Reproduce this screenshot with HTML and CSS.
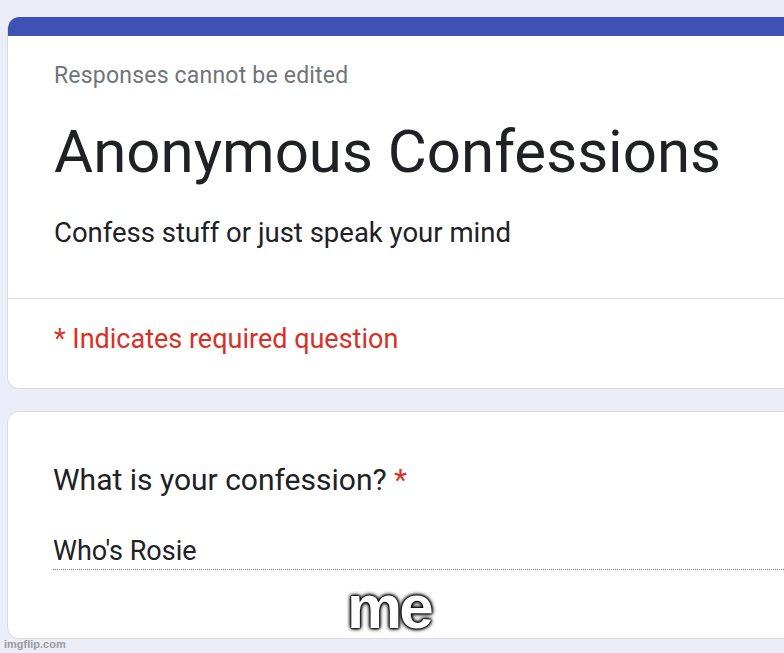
FILE: index.html
```html
<!DOCTYPE html>
<html lang="en">
<head>
  <meta charset="UTF-8" />
  <meta name="viewport" content="width=device-width, initial-scale=1.0"/>
  <title>Anonymous Confessions</title>
  <link rel="stylesheet" href="styles.css">
</head>
<body>
  <div class="page">
    <div class="card header-card">
      <div class="accent"></div>
      <div class="header-body">
        <div class="note">Responses cannot be edited</div>
        <h1 class="title">Anonymous Confessions</h1>
        <div class="desc">Confess stuff or just speak your mind</div>
      </div>
      <div class="required">* Indicates required question</div>
    </div>

    <div class="card question-card">
      <div class="question">What is your confession? <span class="star">*</span></div>
      <div class="answer">Who's Rosie</div>
    </div>
  </div>

  <!-- meme caption + watermark sit on top of the form -->
  <div class="caption">me</div>
  <div class="watermark">imgflip.com</div>
</body>
</html>
```

FILE: styles.css
```css
body {
  margin: 0;
  padding: 0;
  background: #ebedf8;
  font-family: Roboto, "Liberation Sans", sans-serif;
  color: #202124;
  overflow: hidden;
  height: 653px;
  position: relative;
}

.page {
  padding: 17px 0 0 7px;
  width: 900px;
}

.card {
  background: #fff;
  border: 1px solid #dadce0;
  border-radius: 12px;
  overflow: hidden;
}

.header-card {
  border-top: none;
}

.accent {
  height: 19px;
  background: #3f51b5;
}

.header-body {
  padding: 26px 46px 49px;
  border-bottom: 1px solid #dadce0;
}

.note {
  font-size: 23px;
  line-height: 28px;
  letter-spacing: 0.2px;
  color: #70757a;
}

.title {
  margin: 24px 0 0;
  font-size: 60px;
  line-height: 76px;
  font-weight: 400;
}

.desc {
  margin-top: 27px;
  font-size: 27.5px;
  line-height: 32px;
}

.required {
  padding: 25px 46px 34px;
  font-size: 27px;
  line-height: 30px;
  color: #d93025;
}

.question-card {
  margin-top: 22px;
  padding: 50px 0 68px 45px;
}

.question {
  font-size: 30px;
  line-height: 36px;
}

.star {
  color: #d93025;
}

.answer {
  margin-top: 37px;
  padding-bottom: 2px;
  font-size: 27px;
  line-height: 32px;
  border-bottom: 1px dotted #80868b;
}

.caption {
  position: absolute;
  left: 347px;
  top: 576px;
  font-family: "Liberation Sans", Arial, sans-serif;
  font-weight: 700;
  font-size: 62px;
  line-height: 62px;
  letter-spacing: -3px;
  color: #fff;
  text-shadow: 0 0 2px #000, 0 0 2px #000, 0 0 3px #000, 0 0 4px #000, 0 0 5px #000;
}

.watermark {
  position: absolute;
  left: 4px;
  top: 637px;
  font-family: "Liberation Sans", Arial, sans-serif;
  font-weight: 700;
  font-size: 11px;
  line-height: 14px;
  color: #9a9a9a;
}
```
